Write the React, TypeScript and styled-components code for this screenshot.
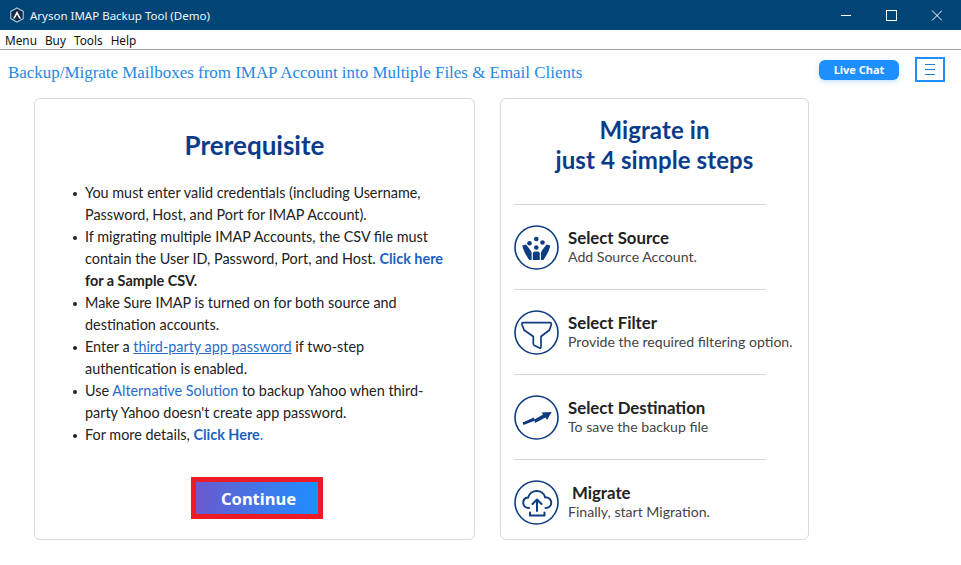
import React from 'react';
import styled, { createGlobalStyle } from 'styled-components';

const GlobalStyle = createGlobalStyle`
  html, body {
    margin: 0;
    padding: 0;
    background: #fff;
    overflow: hidden;
  }
  * {
    box-sizing: border-box;
  }
`;

const Strong = styled.b`
  color: #1f5fc4;
  font-weight: 700;
`;

const BlackStrong = styled.b`
  color: #222;
  font-weight: 700;
`;

const Plain = styled.span`
  color: #2a6cc8;
`;

const Underlined = styled.span`
  color: #2a6cc8;
  text-decoration: underline;
`;

const prerequisites = [
    <>You must enter valid credentials (including Username,<br />Password, Host, and Port for IMAP Account).</>,
    <>If migrating multiple IMAP Accounts, the CSV file must<br />contain the User ID, Password, Port, and Host. <Strong>Click here</Strong><br /><BlackStrong>for a Sample CSV.</BlackStrong></>,
    <>Make Sure IMAP is turned on for both source and<br />destination accounts.</>,
    <>Enter a <Underlined>third-party app password</Underlined> if two-step<br />authentication is enabled.</>,
    <>Use <Plain>Alternative Solution</Plain> to backup Yahoo when third-<br />party Yahoo doesn't create app password.</>,
    <>For more details, <Strong>Click Here</Strong><Plain>.</Plain></>,
];

const App: React.FC = () => {
    return (
        <Page>
            <GlobalStyle />
            <TitleBar>
                <TitleLeft>
                    <svg width="16" height="16" viewBox="0 0 18 18">
                        <path d="M9 1l7 4v8l-7 4-7-4V5z" fill="#16263f" stroke="#9fc4e6" strokeWidth="1.3" />
                        <path d="M9 4.5L13.5 13h-2L9 8.5 6.5 13h-2z" fill="#fff" />
                    </svg>
                    <AppName>Aryson IMAP Backup Tool (Demo)</AppName>
                </TitleLeft>
                <WindowControls>
                    <WindowButton>
                        <svg width="11" height="11" viewBox="0 0 11 11" stroke="#fff" fill="none">
                            <path d="M0 5.5h10" />
                        </svg>
                    </WindowButton>
                    <WindowButton>
                        <svg width="11" height="11" viewBox="0 0 11 11" stroke="#fff" fill="none">
                            <rect x="0.5" y="0.5" width="10" height="10" />
                        </svg>
                    </WindowButton>
                    <WindowButton>
                        <svg width="11" height="11" viewBox="0 0 11 11" stroke="#fff" fill="none">
                            <path d="M1 0.5l10 10M11 0.5l-10 10" />
                        </svg>
                    </WindowButton>
                </WindowControls>
            </TitleBar>
            <MenuBar>
                <MenuItem>Menu</MenuItem>
                <MenuItem>Buy</MenuItem>
                <MenuItem>Tools</MenuItem>
                <MenuItem>Help</MenuItem>
            </MenuBar>
            <Header>
                <Tagline>Backup/Migrate Mailboxes from IMAP Account into Multiple Files &amp; Email Clients</Tagline>
                <HeaderActions>
                    <LiveChat>Live Chat</LiveChat>
                    <Hamburger>
                        <svg width="10" height="11" viewBox="0 0 10 11" stroke="#1e7fd8" fill="none">
                            <path d="M0 0.5h10M0 5.5h10M0 10.5h10" />
                        </svg>
                    </Hamburger>
                </HeaderActions>
            </Header>
            <Main>
                <LeftCard>
                    <LeftTitle>Prerequisite</LeftTitle>
                    <List>
                        {prerequisites.map((item, i) => (
                            <li key={i}>{item}</li>
                        ))}
                    </List>
                    <ContinueButton>Continue</ContinueButton>
                </LeftCard>
                <RightCard>
                    <RightTitle>Migrate in<br />just 4 simple steps</RightTitle>
                    <Steps>
                        <Step>
                            <IconCircle>
                                <svg width="45" height="45" viewBox="0 0 45 45">
                                    <circle cx="22.5" cy="22.5" r="21.5" fill="none" stroke="#0d3c80" strokeWidth="1.6" />
                                    <g fill="#0d3c80">
                                        <circle cx="22.3" cy="14" r="2.3" />
                                        <circle cx="15.5" cy="18.2" r="2.3" />
                                        <circle cx="28.5" cy="17.5" r="2.3" />
                                        <circle cx="22.3" cy="22.5" r="2.3" />
                                        <path d="M8.3 20.5l3.700-1c2 2.800 4.600 5.200 5.600 7.800V35h-2.400c-2.400-3.600-5.600-8.500-6.900-14.500z" />
                                        <path d="M36.300 20.500l-3.700-1c-2 2.800-4.600 5.200-5.600 7.800V35h2.400c2.400-3.600 5.600-8.500 6.900-14.500z" />
                                        <path d="M18.800 28.500c0-1.500 1.300-2 3.500-2s3.500.5 3.500 2V35h-7z" />
                                    </g>
                                </svg>
                            </IconCircle>
                            <StepText>
                                <StepTitle>Select Source</StepTitle>
                                <StepDesc>Add Source Account.</StepDesc>
                            </StepText>
                        </Step>
                        <Step>
                            <IconCircle>
                                <svg width="45" height="45" viewBox="0 0 45 45" fill="none" stroke="#0d3c80">
                                    <circle cx="22.5" cy="22.5" r="21.5" strokeWidth="1.6" />
                                    <path d="M9 12.700h27c1 0 1.500.8 1.300 1.700L35.500 20 27 26.500V37c0 1-.8 1.300-1.500 1l-5-2.500c-.8-.3-1.200-1-1.200-1.800v-7.200L10 20 8 14.500c-.2-1 0-1.800 1-1.800z" strokeWidth="1.7" strokeLinejoin="round" />
                                </svg>
                            </IconCircle>
                            <StepText>
                                <StepTitle>Select Filter</StepTitle>
                                <StepDesc>Provide the required filtering option.</StepDesc>
                            </StepText>
                        </Step>
                        <Step>
                            <IconCircle>
                                <svg width="45" height="45" viewBox="0 0 45 45">
                                    <circle cx="22.5" cy="22.5" r="21.5" fill="none" stroke="#0d3c80" strokeWidth="1.6" />
                                    <path d="M8.500 27.500L20 22.500l.5 2 8.500-5-1.500-2 10.200-.5-4.700 8-1.500-2.500-10.500 5.500-.5-2.200-11 4.200z" fill="#0d3c80" />
                                </svg>
                            </IconCircle>
                            <StepText>
                                <StepTitle>Select Destination</StepTitle>
                                <StepDesc>To save the backup file</StepDesc>
                            </StepText>
                        </Step>
                        <Step>
                            <IconCircle>
                                <svg width="45" height="45" viewBox="0 0 45 45" fill="none" stroke="#0d3c80" strokeWidth="2">
                                    <circle cx="22.5" cy="22.5" r="21.5" strokeWidth="1.6" />
                                    <path d="M15 28c-3.400 0-5.800-2.200-5.800-5.200 0-2.800 2-4.900 4.900-5.200 1-3.900 4.600-6.600 8.600-6.600 4.100 0 7.600 2.600 8.400 6.300 3.500-.1 6.200 2.200 6.200 5.300 0 3.100-2.500 5.400-5.800 5.400" strokeLinecap="round" />
                                    <path d="M23 31V19.500M18.500 24l4.500-4.500 4.500 4.500" strokeLinecap="round" strokeLinejoin="round" />
                                    <path d="M16 32.500v3h14.500v-3" strokeLinecap="round" strokeLinejoin="round" />
                                </svg>
                            </IconCircle>
                            <StepText>
                                <StepTitle $indent>Migrate</StepTitle>
                                <StepDesc>Finally, start Migration.</StepDesc>
                            </StepText>
                        </Step>
                    </Steps>
                </RightCard>
            </Main>
        </Page>
    );
};

const Page = styled.div`
  width: 961px;
  height: 565px;
  display: flex;
  flex-direction: column;
  background: #fff;
  font-family: "Lato", "Liberation Sans", sans-serif;
`;

const TitleBar = styled.div`
  height: 30px;
  background: #004575;
  color: #fff;
  display: flex;
  align-items: center;
  justify-content: space-between;
  padding-left: 9px;
`;

const TitleLeft = styled.div`
  display: flex;
  align-items: center;
  gap: 5px;
`;

const AppName = styled.span`
  font-family: "Noto Sans", sans-serif;
  font-size: 11.5px;
  color: #f2f6fa;
`;

const WindowControls = styled.div`
  display: flex;
  padding-right: 2px;
`;

const WindowButton = styled.div`
  width: 45px;
  height: 30px;
  display: flex;
  align-items: center;
  justify-content: center;
`;

const MenuBar = styled.div`
  height: 20px;
  border-bottom: 1px solid #a0a0a0;
  display: flex;
  align-items: center;
  gap: 8px;
  padding-left: 5px;
`;

const MenuItem = styled.span`
  font-family: "Noto Sans", sans-serif;
  font-size: 11.8px;
  color: #111;
`;

const Header = styled.div`
  height: 48px;
  display: flex;
  align-items: center;
  justify-content: space-between;
  padding: 0 16px 2px 8px;
`;

const Tagline = styled.div`
  font-family: "Liberation Serif", serif;
  font-size: 16.95px;
  color: #1e88e5;
`;

const HeaderActions = styled.div`
  display: flex;
  align-items: center;
  gap: 16px;
  margin-bottom: 7px;
`;

const LiveChat = styled.button`
  width: 80px;
  height: 20px;
  border: none;
  border-radius: 6px;
  background: #1e8fff;
  color: #fff;
  font-family: "Noto Sans", sans-serif;
  font-size: 11px;
  font-weight: 700;
  padding: 0;
  box-shadow: 0 2px 5px rgba(30, 143, 255, 0.25);
`;

const Hamburger = styled.button`
  width: 30px;
  height: 25px;
  border: 2px solid #1e8fff;
  background: #fff;
  display: flex;
  align-items: center;
  justify-content: center;
  padding: 0;
`;

const Main = styled.div`
  display: flex;
  gap: 25px;
  padding-left: 34px;
`;

const Card = styled.div`
  height: 442px;
  border: 1px solid #d8d8d8;
  border-radius: 6px;
  display: flex;
  flex-direction: column;
`;

const LeftCard = styled(Card)`
  width: 441px;
  align-items: center;
`;

const RightCard = styled(Card)`
  width: 309px;
`;

const LeftTitle = styled.h1`
  margin: 29px 0 0;
  font-size: 26px;
  line-height: 34px;
  font-weight: 700;
  color: #0b3c8c;
`;

const List = styled.ul`
  align-self: stretch;
  margin: 20px 0 0;
  padding: 0 0 0 50px;
  list-style: none;
  font-size: 14.4px;
  line-height: 22px;
  color: #222;
  white-space: nowrap;

  li {
    position: relative;
  }

  li::before {
    content: '';
    position: absolute;
    left: -12px;
    top: 10px;
    width: 4px;
    height: 4px;
    border-radius: 50%;
    background: #222;
  }
`;

const ContinueButton = styled.button`
  margin: 31px 0 0 5px;
  width: 132px;
  height: 42px;
  border: 5px solid #ed1c24;
  background: linear-gradient(90deg, #6a5acd, #1e8fff);
  color: #fff;
  font-family: "Noto Sans", sans-serif;
  font-size: 16.5px;
  font-weight: 700;
  padding: 0 0 0 3px;
`;

const RightTitle = styled.h2`
  margin: 16px 0 0;
  text-align: center;
  font-size: 24px;
  line-height: 30px;
  font-weight: 700;
  letter-spacing: 0.1px;
  color: #0b3c8c;
`;

const Steps = styled.div`
  margin: 29px 0 0 13px;
  width: 252px;
  display: flex;
  flex-direction: column;
`;

const Step = styled.div`
  height: 85px;
  border-top: 1px solid #d4d4d4;
  display: flex;
  align-items: flex-start;
  gap: 9px;
  padding-top: 20px;
`;

const IconCircle = styled.div`
  width: 45px;
  height: 45px;
  flex: none;
`;

const StepText = styled.div`
  padding-top: 2px;
  white-space: nowrap;
`;

const StepTitle = styled.div<{ $indent?: boolean }>`
  font-size: 16.8px;
  line-height: 21px;
  font-weight: 700;
  color: #222;
  padding-left: ${(props) => (props.$indent ? '4px' : '0')};
`;

const StepDesc = styled.div`
  font-size: 14.1px;
  line-height: 18px;
  color: #444;
`;

export default App;
